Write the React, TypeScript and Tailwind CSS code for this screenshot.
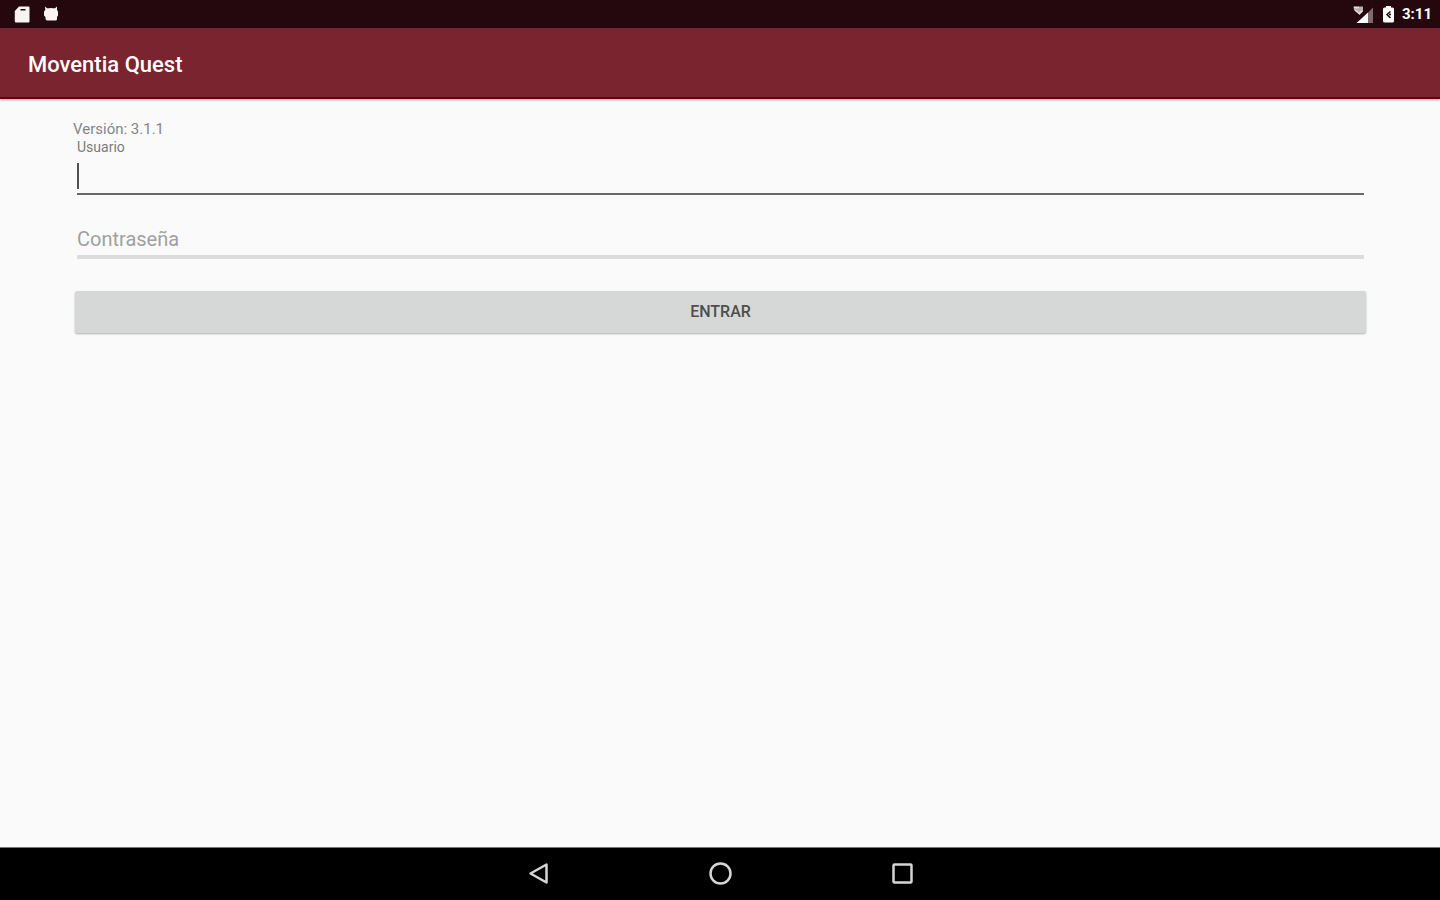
import React, { useState } from "react";

function StatusBar() {
  return (
    <div className="flex h-7 items-center justify-between bg-[#24080d] pl-3 pr-2 text-white">
      <div className="flex items-center gap-2">
        <svg className="h-5 w-5" viewBox="0 0 20 20" fill="#f8f4f4" aria-hidden="true">
          <path fillRule="evenodd" d="M7 2.500h9.500a1 1 0 0 1 1 1v14a1 1 0 0 1-1 1h-12.500a1.200 1.200 0 0 1-1.200-1.200V7zM8.500 5v1.500h5V5z" />
        </svg>
        <svg className="h-5 w-5" viewBox="0 0 20 20" fill="#f8f4f4" aria-hidden="true">
          <path d="M5 2.500l2 1.700h2q2-.5 4 0h2l2-1.700v3.500l1 1.500v4L17 13v2q0 1.500-1.500 1.500h-8Q6 16.500 5.500 15v-2L4 11.500v-4L5.300 6z" />
        </svg>
      </div>
      <div className="flex items-center gap-1">
        <div className="flex items-center gap-1">
          <svg className="h-5 w-6" viewBox="0 0 24 20" aria-hidden="true">
            <path d="M23 3.500V19H8z" fill="#7d6b6e" />
            <path d="M18 8.500V19H6.500z" fill="#fff" />
            <path d="M3.500 2.500h9.500v5l-3.500 3.500L4 6z" fill="#b8adaf" />
            <path d="M4 3.500h5M5 6l4.500 3.500L12 6.500" fill="none" stroke="#e4dcdd" strokeWidth="1.500" />
          </svg>
          <svg className="h-5 w-5" viewBox="0 0 20 20" aria-hidden="true">
            <path d="M8 2h5v1.500h1.500q1.500 0 1.500 1.500v12q0 1.500-1.500 1.500h-8q-1.500 0-1.500-1.500v-12Q5 3.500 6.500 3.500H8z" fill="#fff" />
            <path d="M12.500 7.500L9 10.500l3.500 3.500M11 10.500h2" fill="none" stroke="#24080d" strokeWidth="1.500" />
          </svg>
        </div>
        <span className="text-[15px] leading-5 font-bold">3:11</span>
      </div>
    </div>
  );
}

function LoginForm() {
  const [user, setUser] = useState("");
  return (
    <form className="flex flex-col" onSubmit={(e) => e.preventDefault()}>
      <div className="mx-1 flex flex-col">
        <label htmlFor="user" className="text-sm leading-4 text-[#7a7a7a]">
          Usuario
        </label>
        <div className="relative mt-1 h-9 border-b-2 border-[#686868]">
          <input
            id="user"
            value={user}
            onChange={(e) => setUser(e.target.value)}
            className="block h-full w-full bg-transparent text-xl text-[#333] outline-none"
            style={{ caretColor: user ? "#505050" : "transparent" }}
          />
          {user === "" && (
            <span className="pointer-events-none absolute top-1 left-0 h-[26px] w-0.5 bg-[#505050]" />
          )}
        </div>
      </div>
      <div className="mx-1 mt-7 border-b-4 border-[#dcdcdc]">
        <input
          type="password"
          aria-label="Contraseña"
          placeholder="Contraseña"
          className="block h-8 w-full bg-transparent text-xl text-[#333] outline-none placeholder:text-[#a0a0a0]"
        />
      </div>
      <button
        type="submit"
        className="mx-[2px] mt-8 h-[42px] rounded-xs bg-[#d6d8d7] text-base font-medium text-[#4d4e4e] shadow-[0_1px_2px_rgba(0,0,0,0.3)]"
      >
        ENTRAR
      </button>
    </form>
  );
}

function NavigationBar() {
  return (
    <nav className="flex h-[53px] items-center justify-center gap-[150px] border-t border-[#777] bg-black">
      <button type="button" aria-label="Atrás" className="h-8 w-8">
        <svg viewBox="0 0 32 32" fill="none" stroke="#d5d5d5" strokeWidth="2.500" strokeLinejoin="round" aria-hidden="true">
          <path d="M8.500 15.500L24.500 6.500v18z" />
        </svg>
      </button>
      <button type="button" aria-label="Inicio" className="h-8 w-8">
        <svg viewBox="0 0 32 32" fill="none" stroke="#d5d5d5" strokeWidth="2.500" aria-hidden="true">
          <circle cx="16.500" cy="15.500" r="10" />
        </svg>
      </button>
      <button type="button" aria-label="Recientes" className="h-8 w-8">
        <svg viewBox="0 0 32 32" fill="none" stroke="#d5d5d5" strokeWidth="2.500" aria-hidden="true">
          <rect x="7.500" y="6.500" width="18" height="18" rx="1" />
        </svg>
      </button>
    </nav>
  );
}

export default function App() {
  return (
    <div className="flex min-h-screen flex-col bg-[#fafafa] font-[Roboto,sans-serif]">
      <StatusBar />
      <header className="flex h-[71px] items-center border-b-2 border-[#68000f] bg-[#79242f] px-7 pt-1 shadow-[0_1px_2px_rgba(0,0,0,0.35)]">
        <h1 className="text-[22px] leading-7 font-medium text-white">Moventia Quest</h1>
      </header>
      <main className="flex-1 pt-5 pr-[72px] pl-[73px]">
        <p className="text-[15px] leading-5 text-[#858585]">Versión: 3.1.1</p>
        <LoginForm />
      </main>
      <NavigationBar />
    </div>
  );
}
